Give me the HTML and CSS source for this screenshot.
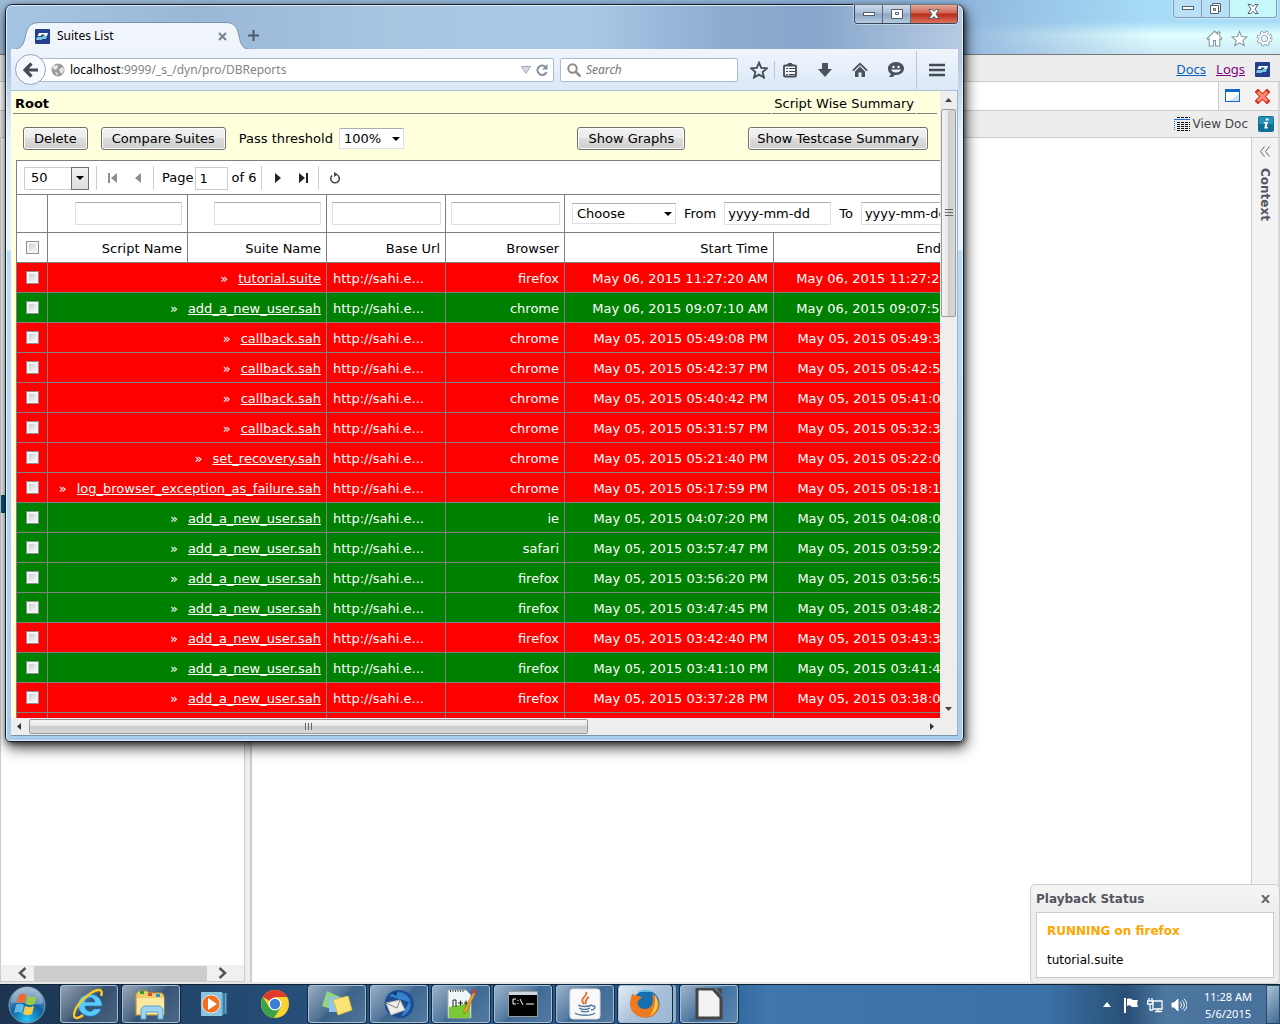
FILE: index.html
```html
<!DOCTYPE html>
<html lang="en">
<head>
<meta charset="utf-8">
<title>Suites List</title>
<link rel="stylesheet" href="styles.css">
</head>
<body>
<svg class="defs" aria-hidden="true">
  <symbol id="sahi" viewBox="0 0 15 15"><rect width="15" height="15" rx="1" fill="#233f8e"/><path d="M4 4h9l-1 3H9l.5-1.500H6.500L6 7H2.500z" fill="#fff"/><path d="M2 8h5l2-1.500h3L11 10H7.500l-1 1H1z" fill="#7cc5e0"/></symbol>
  <symbol id="house" viewBox="0 0 16 16"><path d="M8 1L1 8l1 1 1-.7V15h4v-5h2v5h4V8.300L14 9l1-1-2-2V2h-2v2z"/></symbol>
  <symbol id="home" viewBox="0 0 16 16"><path d="M8 4.500L3 9.500V15h3.500v-4.500h3V15H13V9.500z"/><path d="M.8 8.700L8 1.800l7.200 6.900" fill="none" stroke="#4a535e" stroke-width="1.800"/></symbol>
  <symbol id="star" viewBox="0 0 16 16"><path d="M8 1.500l2 4.600 5 .4-3.800 3.300 1.200 4.900L8 12.100l-4.400 2.600 1.200-4.900L1 6.500l5-.4z"/></symbol>
</svg>
<div class="desktop">
  <div class="ie">
    <header class="ie-glass">
      <div class="caption caption-pale">
        <button aria-label="Minimize"><svg width="12" height="5"><rect x=".5" y=".5" width="11" height="3" fill="#fff" stroke="#53606f"/></svg></button>
        <button aria-label="Restore"><svg width="13" height="12" fill="#fff" stroke="#53606f"><path d="M3.500.5h8v8h-8z"/><path d="M1.500 2.500h8v8h-8zM4.500 5.500h2v2h-2z"/></svg></button>
        <button class="wide" aria-label="Close"><svg width="12" height="10" fill="#fff" stroke="#53606f"><path d="M1 .5h3l2 2 2-2h3L8 5l3 4.500H8l-2-2-2 2H1L4 5z"/></svg></button>
      </div>
      <div class="ie-tools">
        <svg width="17" height="17" fill="#fff" stroke="#8798a4"><use href="#house"/></svg>
        <svg width="17" height="17" fill="#fff" stroke="#8798a4"><use href="#star"/></svg>
        <svg width="17" height="17" viewBox="0 0 17 17" fill="none"><circle cx="8.500" cy="8.500" r="6.500" stroke="#8798a4" stroke-width="3" stroke-dasharray="3 2.100"/><circle cx="8.500" cy="8.500" r="4.500" stroke="#8798a4" stroke-width="3.500"/><circle cx="8.500" cy="8.500" r="6.200" stroke="#fff" stroke-width="2" stroke-dasharray="1.800 3.070" stroke-dashoffset="-.6"/><circle cx="8.500" cy="8.500" r="4.500" stroke="#fff" stroke-width="2"/></svg>
      </div>
    </header>
    <nav class="bar links-bar">
      <a class="docs" href="#docs">Docs</a><a class="logs" href="#logs">Logs</a>
      <svg width="15" height="15"><use href="#sahi"/></svg>
    </nav>
    <div class="bar tabs-bar">
      <div class="tab-tools">
        <svg width="15" height="14"><rect x=".5" y=".5" width="14" height="12" fill="#fff" stroke="#1267c8"/><path d="M0 0h15v3H0z" fill="#1267c8"/><path d="M14 5v7H4z" fill="#cfe3f7"/></svg>
        <svg width="15" height="15"><path d="M3 3l9 9M12 3l-9 9" stroke="#d8351c" stroke-width="5" stroke-linecap="square"/><path d="M3 3l9 9M12 3l-9 9" stroke="#ff8c75" stroke-width="3"/></svg>
      </div>
    </div>
    <div class="bar doc-bar">
      <svg width="16" height="14" fill="none"><path d="M0 2.500h16" stroke="#1a6fd0"/><path d="M.5 4v10" stroke="#1a6fd0" stroke-dasharray="1 1"/><path d="M3 .5h13M3 5.500h13M3 7.500h13M3 9.500h13M3 11.500h13M3 13.500h13" stroke="#111" stroke-dasharray="3 1"/></svg>
      <span>View Doc</span>
      <svg class="info" width="16" height="16"><rect width="16" height="16" rx="2" fill="#0d7196"/><rect x="1" y="1" width="14" height="7" fill="#2593b6"/><path d="M8 2.500h2.500v2H7.600zM6 6h4l-1.300 5H10l-.4 1.500H6.200L7.300 7.500H5.600z" fill="#fff"/></svg>
    </div>
    <div class="ie-body">
      <div class="tree">
        <div class="tree-list"><div class="tree-pick"></div></div>
        <div class="flat-scroll">
          <svg width="10" height="12"><path d="M8.500 1L3 6l5.500 5" fill="none" stroke="#555" stroke-width="2.500"/></svg>
          <div class="flat-thumb"></div>
          <svg width="10" height="12"><path d="M1.500 1L7 6l-5.500 5" fill="none" stroke="#555" stroke-width="2.500"/></svg>
        </div>
      </div>
      <main class="editor"></main>
      <aside class="context"><svg width="10" height="11" fill="none" stroke="#666" stroke-width="1"><path d="M4.500.5l-4 5 4 5M9.500.5l-4 5 4 5"/></svg><span>Context</span></aside>
    </div>
  </div>

  <section class="playback">
    <header><h2>Playback Status</h2><button aria-label="Close"><svg width="9" height="8"><path d="M1 0l7 8M8 0L1 8" stroke="#666" stroke-width="2"/></svg></button></header>
    <div class="playback-body"><strong>RUNNING on firefox</strong><p>tutorial.suite</p></div>
  </section>

  <section class="firefox">
    <header class="strip">
      <div class="tab">
        <svg class="tab-shape" width="240" height="28" viewBox="0 0 240 28"><path d="M0 28C10 27 12 24 14 16C16 5 19 .5 29 .5H214C224 .5 226 5 228 14C230 24 232 27 240 27.500V28z" fill="#f0f5fc" stroke="#7c93ad"/><path d="M0 28h240" stroke="#f0f5fc"/></svg>
        <div class="tab-text"><svg width="15" height="15"><use href="#sahi"/></svg><span>Suites List</span><svg width="9" height="9"><path d="M1 1l7 7M8 1L1 8" stroke="#75818f" stroke-width="2"/></svg></div>
      </div>
      <svg class="plus" width="11" height="11"><path d="M5.500 0v11M0 5.500h11" stroke="#505a66" stroke-width="2"/></svg>
      <div class="caption">
        <button aria-label="Minimize"><svg width="12" height="5"><rect x=".5" y=".5" width="11" height="3" fill="#fff" stroke="#53606f"/></svg></button>
        <button aria-label="Maximize"><svg width="12" height="10" fill="#fff" stroke="#53606f"><path d="M.5.500h11v9H.5zM4.500 3.500h3v2h-3z"/></svg></button>
        <button class="wide close" aria-label="Close"><svg width="12" height="10" fill="#fff" stroke="#53606f"><path d="M1 .5h3l2 2 2-2h3L8 5l3 4.500H8l-2-2-2 2H1L4 5z"/></svg></button>
      </div>
    </header>
    <div class="chrome">
      <button class="back" aria-label="Back"><svg width="16" height="16"><path d="M8.500 1.500L2 8l6.500 6.500M2.500 8H15" fill="none" stroke="#434b55" stroke-width="3.200"/></svg></button>
      <div class="url">
        <svg width="14" height="14"><circle cx="7" cy="7" r="6.500" fill="#9c9c9c"/><path d="M2 3l4-1 1 2-2 3-3-1zM8 6l4-2 1 3-2 4-2-2zM4 9l3 1-1 3z" fill="#e6e6e6"/></svg>
        <span class="address"><b>localhost</b>:9999/_s_/dyn/pro/DBReports</span>
        <svg width="10" height="8"><path d="M.5.500h9L5 7.500z" fill="#d5dbe2" stroke="#a2acb7"/></svg>
        <svg class="reload" width="12" height="12"><path d="M10 3.500A4.700 4.700 0 1 0 10.500 8" fill="none" stroke="#8393a3" stroke-width="2"/><path d="M11.500 0v5.500H6z" fill="#8393a3"/></svg>
      </div>
      <div class="search"><svg width="14" height="14" fill="none" stroke="#8c8c8c"><circle cx="5.500" cy="5.500" r="4.200" stroke-width="2"/><path d="M8.500 8.500l5 5" stroke-width="2.500"/></svg><input aria-label="Search" placeholder="Search"></div>
      <div class="ff-tools">
        <svg width="18" height="18" viewBox="0 0 16 16" fill="none" stroke="#434b55" stroke-width="1.600"><use href="#star"/></svg>
        <i class="sep short"></i>
        <svg width="16" height="16"><rect x="2" y="3.500" width="12" height="11" rx="1" fill="#f4f8fd" stroke="#434b55" stroke-width="1.800"/><path d="M5 3.500l1.500-2h3l1.500 2z" stroke="#434b55" fill="#434b55"/><path d="M4 6.500h2M7 6.500h6M4 9.500h2M7 9.500h6M4 12.500h2M7 12.500h6" stroke="#434b55"/></svg>
        <svg width="14" height="14"><path d="M4 0h6v6h4l-7 8-7-8h4z" fill="#4a535e"/></svg>
        <svg width="16" height="16" fill="#4a535e"><use href="#home"/></svg>
        <svg width="16" height="15"><path d="M8 0c5 0 8 3 8 6.500S13 13 8 13c-1 0-2 0-3 2l-4 0 2-3C1 11 0 9 0 6.500 0 3 3 0 8 0z" fill="#4a535e"/><circle cx="5.500" cy="5" r="1.200" fill="#fff"/><circle cx="10.500" cy="5" r="1.200" fill="#fff"/><path d="M3 7.500h10c-1 4-9 4-10 0z" fill="#e5effa"/></svg>
        <i class="sep"></i>
        <svg width="16" height="14"><path d="M0 2h16M0 7h16M0 12h16" stroke="#434b55" stroke-width="2.600"/></svg>
      </div>
    </div>
    <div class="view">
      <div class="page">
        <div class="crumbs"><strong>Root</strong><span class="mode">Script Wise Summary</span><span class="rest"></span></div>
        <div class="actions">
          <button class="btn">Delete</button>
          <button class="btn">Compare Suites</button>
          <label for="pass">Pass threshold</label>
          <div class="pick pass"><select id="pass"><option>100%</option></select><i></i></div>
          <button class="btn graphs">Show Graphs</button>
          <button class="btn tight">Show Testcase Summary</button>
        </div>
        <div class="grid">
          <div class="pager">
            <div class="pick size"><select aria-label="Rows per page"><option>50</option></select><i></i></div>
            <i class="rule"></i>
            <button aria-label="First page"><svg width="9" height="10" fill="#8d8d8d"><path d="M0 0h2v10H0zM9 0v10L3 5z"/></svg></button>
            <button aria-label="Previous page"><svg width="9" height="10" fill="#8d8d8d"><path d="M7 0v10L1 5z"/></svg></button>
            <i class="rule"></i>
            <label for="pg">Page</label><input id="pg" value="1"><span>of 6</span>
            <i class="rule"></i>
            <button aria-label="Next page"><svg width="9" height="10" fill="#222"><path d="M2 0v10l6-5z"/></svg></button>
            <button aria-label="Last page"><svg width="9" height="10" fill="#222"><path d="M7 0h2v10H7zM0 0v10l6-5z"/></svg></button>
            <i class="rule"></i>
            <button aria-label="Refresh"><svg width="12" height="12"><path d="M3 3.500A4.300 4.300 0 1 0 8.500 3" fill="none" stroke="#444" stroke-width="1.500"/><path d="M5 0l4 2.500L5 5z" fill="#444"/></svg></button>
          </div>
          <table>
            <colgroup><col class="c-tick"><col class="c-script"><col class="c-suite"><col class="c-mid"><col class="c-mid"><col class="c-time"><col class="c-time"></colgroup>
            <thead>
              <tr class="filters"><td></td><td><input aria-label="Script Name"></td><td><input aria-label="Suite Name"></td><td><input aria-label="Base Url"></td><td><input aria-label="Browser"></td>
                <td colspan="2"><div class="dates"><div class="pick choose"><select aria-label="Period"><option>Choose</option></select><i></i></div><label for="from">From</label><input id="from" value="yyyy-mm-dd"><label for="to">To</label><input id="to" value="yyyy-mm-dd"></div></td></tr>
              <tr><th><input type="checkbox" aria-label="Select all"></th><th>Script Name</th><th>Suite Name</th><th>Base Url</th><th>Browser</th><th>Start Time</th><th>End Time</th></tr>
            </thead>
            <tbody>
              <tr class="fail"><td><input type="checkbox" aria-label="Select"></td><td colspan="2">»<a href="#r1">tutorial.suite</a></td><td>http://sahi.e...</td><td>firefox</td><td>May 06, 2015 11:27:20 AM</td><td>May 06, 2015 11:27:28 AM</td></tr>
              <tr class="pass-row"><td><input type="checkbox" aria-label="Select"></td><td colspan="2">»<a href="#r2">add_a_new_user.sah</a></td><td>http://sahi.e...</td><td>chrome</td><td>May 06, 2015 09:07:10 AM</td><td>May 06, 2015 09:07:50 AM</td></tr>
              <tr class="fail"><td><input type="checkbox" aria-label="Select"></td><td colspan="2">»<a href="#r3">callback.sah</a></td><td>http://sahi.e...</td><td>chrome</td><td>May 05, 2015 05:49:08 PM</td><td>May 05, 2015 05:49:30 PM</td></tr>
              <tr class="fail"><td><input type="checkbox" aria-label="Select"></td><td colspan="2">»<a href="#r4">callback.sah</a></td><td>http://sahi.e...</td><td>chrome</td><td>May 05, 2015 05:42:37 PM</td><td>May 05, 2015 05:42:58 PM</td></tr>
              <tr class="fail"><td><input type="checkbox" aria-label="Select"></td><td colspan="2">»<a href="#r5">callback.sah</a></td><td>http://sahi.e...</td><td>chrome</td><td>May 05, 2015 05:40:42 PM</td><td>May 05, 2015 05:41:03 PM</td></tr>
              <tr class="fail"><td><input type="checkbox" aria-label="Select"></td><td colspan="2">»<a href="#r6">callback.sah</a></td><td>http://sahi.e...</td><td>chrome</td><td>May 05, 2015 05:31:57 PM</td><td>May 05, 2015 05:32:30 PM</td></tr>
              <tr class="fail"><td><input type="checkbox" aria-label="Select"></td><td colspan="2">»<a href="#r7">set_recovery.sah</a></td><td>http://sahi.e...</td><td>chrome</td><td>May 05, 2015 05:21:40 PM</td><td>May 05, 2015 05:22:00 PM</td></tr>
              <tr class="fail"><td><input type="checkbox" aria-label="Select"></td><td colspan="2">»<a href="#r8">log_browser_exception_as_failure.sah</a></td><td>http://sahi.e...</td><td>chrome</td><td>May 05, 2015 05:17:59 PM</td><td>May 05, 2015 05:18:10 PM</td></tr>
              <tr class="pass-row"><td><input type="checkbox" aria-label="Select"></td><td colspan="2">»<a href="#r9">add_a_new_user.sah</a></td><td>http://sahi.e...</td><td>ie</td><td>May 05, 2015 04:07:20 PM</td><td>May 05, 2015 04:08:00 PM</td></tr>
              <tr class="pass-row"><td><input type="checkbox" aria-label="Select"></td><td colspan="2">»<a href="#r10">add_a_new_user.sah</a></td><td>http://sahi.e...</td><td>safari</td><td>May 05, 2015 03:57:47 PM</td><td>May 05, 2015 03:59:20 PM</td></tr>
              <tr class="pass-row"><td><input type="checkbox" aria-label="Select"></td><td colspan="2">»<a href="#r11">add_a_new_user.sah</a></td><td>http://sahi.e...</td><td>firefox</td><td>May 05, 2015 03:56:20 PM</td><td>May 05, 2015 03:56:50 PM</td></tr>
              <tr class="pass-row"><td><input type="checkbox" aria-label="Select"></td><td colspan="2">»<a href="#r12">add_a_new_user.sah</a></td><td>http://sahi.e...</td><td>firefox</td><td>May 05, 2015 03:47:45 PM</td><td>May 05, 2015 03:48:20 PM</td></tr>
              <tr class="fail"><td><input type="checkbox" aria-label="Select"></td><td colspan="2">»<a href="#r13">add_a_new_user.sah</a></td><td>http://sahi.e...</td><td>firefox</td><td>May 05, 2015 03:42:40 PM</td><td>May 05, 2015 03:43:30 PM</td></tr>
              <tr class="pass-row"><td><input type="checkbox" aria-label="Select"></td><td colspan="2">»<a href="#r14">add_a_new_user.sah</a></td><td>http://sahi.e...</td><td>firefox</td><td>May 05, 2015 03:41:10 PM</td><td>May 05, 2015 03:41:40 PM</td></tr>
              <tr class="fail"><td><input type="checkbox" aria-label="Select"></td><td colspan="2">»<a href="#r15">add_a_new_user.sah</a></td><td>http://sahi.e...</td><td>firefox</td><td>May 05, 2015 03:37:28 PM</td><td>May 05, 2015 03:38:00 PM</td></tr>
              <tr class="fail"><td></td><td colspan="2"></td><td></td><td></td><td></td><td></td></tr>
            </tbody>
          </table>
        </div>
      </div>
      <div class="vbar">
        <svg width="7" height="4"><path d="M3.500 0L7 4H0z" fill="#444"/></svg>
        <div class="vthumb"><svg width="8" height="8"><path d="M0 .5h8M0 3.500h8M0 6.500h8" stroke="#666"/></svg></div>
        <svg class="end" width="7" height="4"><path d="M3.500 4L7 0H0z" fill="#444"/></svg>
      </div>
      <div class="hbar">
        <svg width="4" height="7"><path d="M0 3.500L4 0v7z" fill="#333"/></svg>
        <div class="hthumb"><svg width="8" height="7"><path d="M.5 0v7M3.500 0v7M6.500 0v7" stroke="#666"/></svg></div>
        <svg class="end" width="4" height="7"><path d="M4 3.500L0 0v7z" fill="#333"/></svg>
      </div>
      <div class="corner"></div>
    </div>
  </section>

  <footer class="taskbar">
    <button class="start" aria-label="Start"><svg width="38" height="38" viewBox="0 0 38 38"><defs><radialGradient id="orb" cx=".5" cy=".9" r=".9"><stop offset="0" stop-color="#25c4f5"/><stop offset=".5" stop-color="#10639f"/><stop offset="1" stop-color="#89a5bf"/></radialGradient></defs><circle cx="19" cy="19" r="18" fill="url(#orb)" stroke="#7699b5"/><path d="M3 17a16 16 0 0 1 32 0c-8 4-22-1-32 0z" fill="#fff" opacity=".3"/><path d="M11 9c3-2 5-1 7.500 0l-2 8c-3-1.500-5-1.500-8 0z" fill="#ef6a2f"/><path d="M19.500 10c3 1.500 6 1.500 9 0l-2 8c-3 1.500-6 1.500-9 0z" fill="#9ccb49"/><path d="M8 19c3-2 5-1 8 0l-2 8c-3-1.500-5-1.500-8 0z" fill="#63b9ea"/><path d="M17 20c3 1.500 6 1.500 9 0l-2 8c-3 1.500-6 1.500-9 0z" fill="#fbcb45"/></svg></button>
    <button class="task on" aria-label="Internet Explorer"><svg width="32" height="32"><path d="M29 18H12c0 6 7 7 9 3h7c-4 11-22 9-23-4C5 3 29 2 29 18zM12 14h10c-1-6-9-6-10 0z" fill="#5ccaf8" stroke="#1f7fc2" stroke-width=".7"/><path d="M28 8c3-8-4-7-10-3C8 11 1 21 1 27c0 5 6 3 9 0" fill="none" stroke="#f8c923" stroke-width="2.500"/></svg></button>
    <button class="task on" aria-label="Explorer"><svg width="34" height="32"><path d="M2 6l3-3h8l2 2h13l2 3v19H2z" fill="#f0cd66" stroke="#c79c37"/><path d="M6 3h4v3H6z" fill="#1d9f39"/><path d="M14 5h4v3h-4z" fill="#d64c36"/><path d="M22 6h4v3h-4z" fill="#3091db"/><path d="M3 10h27v16H3z" fill="#fae8a1"/><path d="M7 31V21l3-3h16l3 3v10h-5v-7H12v7z" fill="#9ed4ef" stroke="#5ba5cc"/></svg></button>
    <button class="task" aria-label="Media Player"><svg width="32" height="32"><path d="M4 4h21v24H4z" fill="#8cc5e3"/><path d="M25.500 5v22M28.500 5v21" stroke="#5fa8cf" stroke-width="2"/><circle cx="14" cy="16" r="9" fill="#f1701e" stroke="#fff" stroke-width=".7"/><path d="M11 10l9 6-9 6z" fill="#fff"/></svg></button>
    <button class="task" aria-label="Chrome"><svg width="30" height="30" viewBox="0 0 30 30"><circle cx="15" cy="15" r="14" fill="#fbd330"/><path d="M15 15L2.900 8A14 14 0 0 1 27.200 8H15z" fill="#df3a2d"/><path d="M2.900 8A14 14 0 0 0 14 29l7-11-6 3-6-3z" fill="#3aa34a"/><circle cx="15" cy="15" r="6.500" fill="#fff"/><circle cx="15" cy="15" r="5.200" fill="#3c7ed0"/></svg></button>
    <button class="task on" aria-label="Sticky Notes"><svg width="34" height="28"><path d="M7 1l13 6-6 13L2 16z" fill="#92d481"/><path d="M9 7h14v15H9z" fill="#8fc5f6"/><path d="M13 10l15-4 4 14-14 5z" fill="#fae477" stroke="#d9ba3d"/></svg></button>
    <button class="task on" aria-label="Thunderbird"><svg width="34" height="32"><path d="M5 8C10 0 25 0 30 9c5 10-1 22-13 21C5 29-1 18 5 8z" fill="#1c4c94"/><path d="M7 8c7-6 17-5 21 4 3 9-4 15-9 17l8-15z" fill="#3583cc"/><path d="M4 15l14-3 5 10-14 5z" fill="#f0eee8" stroke="#b5afa5"/><path d="M4 15l11 5 3-8" fill="none" stroke="#888"/><path d="M10 5l5-1-1 4z" fill="#0f3469"/></svg></button>
    <button class="task on" aria-label="Notepad++"><svg width="32" height="32"><path d="M3 2h18l5 5v23H3z" fill="#eef7f9" stroke="#aaa"/><path d="M4 19l21-4v15H4z" fill="#7cc936"/><path d="M5 3h15" stroke="#555" stroke-dasharray="1 1.500" stroke-width="2"/><path d="M8 19v-7h3v7M13 15h5M15.500 12.500v5M19 15h4M21 12.500v5" fill="none" stroke="#222"/><path d="M29 3l2 1-9 19-3 3v-4z" fill="#f1a52b" stroke="#976117" stroke-width=".6"/><path d="M28 1l4 2-1 3-4-2z" fill="#c24545"/></svg></button>
    <button class="task on" aria-label="Command Prompt"><svg width="30" height="26"><path d="M.5.500h29v25H.5z" fill="#000" stroke="#999"/><path d="M1 1h28v3H1z" fill="#ccd5e0"/><path d="M8 8H5v5h3M10 9v1M10 12v1M12 8l3 6M18 13h8" fill="none" stroke="#fff"/></svg></button>
    <button class="task on" aria-label="Java"><svg width="32" height="32"><rect x="1" y="1" width="30" height="30" rx="3" fill="#f8f8f8" stroke="#ddd"/><path d="M17 4c3 4-8 6-2 12M20 9c-5 3-2 5-4 7" fill="none" stroke="#e66b2b" stroke-width="1.800"/><path d="M9 17c3 2 10 2 14 0M10 20c3 2 8 2 11 0M12 23c2 1 6 1 8 0M6 25c4 3 17 3 20 0M23 18c5-1 3 4-1 4" fill="none" stroke="#54799a" stroke-width="1.500"/></svg></button>
    <button class="task on active" aria-label="Firefox"><svg width="32" height="32"><circle cx="17" cy="16" r="13.500" fill="#146eaf"/><path d="M9 4c8-5 19-1 20 9 0-3-2-7-5-9z" fill="#65bce5"/><path d="M3 6c2 1 4 1 6 2l4 1-4 4c-2 6 5 10 11 7 4-2 5-9 3-14 9 5 9 16 2 21-9 6-23 1-24-10 0-5 1-7 2-11z" fill="#ec7a20"/><path d="M26 7c5 7 3 17-5 21 4-6 6-13 5-21z" fill="#f9cf40"/></svg></button>
    <button class="task on" aria-label="LibreOffice"><svg width="28" height="32"><path d="M2 1h16l8 9v20H2z" fill="#f3f3f3" stroke="#454545" stroke-width="3"/><path d="M18 1l8 9" stroke="#454545" stroke-width="2"/><path d="M21 0h6v7z" fill="#4b4b4b"/></svg></button>
    <div class="tray">
      <svg width="8" height="5"><path d="M4 0l4 5H0z" fill="#fff"/></svg>
      <svg width="16" height="16" fill="#fff"><path d="M1 1h2v15H1zM4 2c3-1 4 0 6 1h5l-1 3 1 4H9C7 8 6 8 4 9z"/></svg>
      <svg width="16" height="16" fill="none" stroke="#fff" stroke-width="1.300"><path d="M6 4h9v8H6zM8 14.500h7M11 12v3M2 1v3M5 1v3M.5 4h5v3h-5zM3 7v6h3"/></svg>
      <svg width="16" height="16" fill="none" stroke="#fff"><path d="M1 6h2l4-4v12l-4-4H1z" fill="#fff"/><path d="M9 5c2 2 2 4 0 6M11 3.500c3 3 3 6 0 9M13 2c4 4 4 8 0 12"/></svg>
      <div class="clock"><span>11:28 AM</span><span>5/6/2015</span></div>
      <button class="peek" aria-label="Show desktop"></button>
    </div>
  </footer>
</div>
</body>
</html>
```
FILE: styles.css
```css
* { box-sizing: border-box; }
body { margin: 0; font: 13px/16px Verdana, "DejaVu Sans", sans-serif; color: #000; }
button, input, select { font: inherit; color: inherit; margin: 0; padding: 0; }
button { border: 0; background: none; }
svg { display: block; flex: none; }
.defs { position: absolute; width: 0; height: 0; }
.desktop { position: relative; display: flex; flex-direction: column; height: 100vh; overflow: hidden; background: #fff; }

/* Browser in the background */
.ie { flex: 1; min-height: 0; display: flex; flex-direction: column; }
.ie-glass { height: 55px; display: flex; flex-direction: column; align-items: flex-end; justify-content: space-between; padding-right: 3px; border-bottom: 1px solid #777;
  background: linear-gradient(90deg, #9dbbd8, #8fb4dc 74%, #8fb4dc00 90%), linear-gradient(#a5dcf6, #a8dcf7 40%, #e0ffff 65%, #cce9f5); }
.caption { display: flex; align-self: flex-start; border: 1px solid #39465a; border-top: 0; border-radius: 0 0 4px 4px; overflow: hidden; box-shadow: 0 0 0 1px #ffffff66; }
.caption button { width: 28px; height: 18px; display: grid; place-items: center; border-right: 1px solid #596b80; background: linear-gradient(#cddaea, #a9bdd4 45%, #8ca5c2 50%, #b5cbe2); }
.caption button.wide { width: 46px; border-right: 0; }
.caption button.close { background: linear-gradient(#e5a99b, #cf6150 45%, #b62a14 50%, #dc7460); }
.caption-pale { align-self: flex-end; border-color: #7f9db5; }
.caption-pale button { height: 17px; background: #b9e0f5; border-color: #7f9db5; }
.caption-pale .wide { background: #c8f8fc; }
.ie-tools { display: flex; gap: 8px; padding: 0 4px 7px 0; }
.bar { display: flex; align-items: center; justify-content: flex-end; background: #ededed; border-bottom: 1px solid #ccc; border-right: 2px solid #d5d5d5; }
.links-bar { height: 27px; gap: 10px; padding: 2px 10px 0 0; font-family: "Noto Sans", sans-serif; border-right: 0; }
.links-bar .docs { color: #0563c1; }
.links-bar .logs { color: #800080; }
.tabs-bar { height: 29px; background: #fff; align-items: stretch; }
.tab-tools { display: flex; align-items: center; gap: 15px; padding: 0 8px 0 6px; border-left: 1px solid #ccc; background: #f3f3f3; }
.doc-bar { height: 27px; gap: 3px; padding-right: 4px; font: 12px/16px "DejaVu Sans", sans-serif; color: #444; }
.doc-bar .info { margin-left: 7px; }
.ie-body { flex: 1; min-height: 0; display: flex; background: #ededed; border-bottom: 2px solid #e6e6e6; }
.tree { width: 245px; display: flex; flex-direction: column; border: 1px solid #ccc; border-top: 0; background: #fff; }
.tree-list { flex: 1; padding-top: 357px; }
.tree-pick { height: 18px; background: #005a84; }
.flat-scroll { height: 16px; display: flex; align-items: center; gap: 7px; padding: 0 16px; background: #f0f0f0; }
.flat-thumb { flex: 1; height: 15px; margin-right: 4px; background: #cdcdcd; }
.editor { flex: 1; margin-left: 5px; background: #fff; border-left: 2px solid #ccc; }
.context { width: 29px; padding: 8px 7px; display: flex; flex-direction: column; align-items: center; gap: 11px; background: #f3f3f3; border-left: 1px solid #ccc; border-right: 2px solid #d5d5d5; font: bold 12px/14px "DejaVu Sans", sans-serif; color: #555560; }
.context span { writing-mode: vertical-rl; }

/* Playback popup */
.playback { position: absolute; right: 0; bottom: 40px; width: 250px; padding: 0 5px 5px; background: linear-gradient(#f5f5f5, #ededed 30px); border: 1px solid #ccc; border-radius: 5px; }
.playback header { display: flex; align-items: center; justify-content: space-between; height: 27px; padding-right: 4px; }
.playback h2 { margin: 0; font: bold 12px/16px "DejaVu Sans", sans-serif; color: #555560; }
.playback-body { height: 66px; padding: 10px; border: 1px solid #ccc; background: #fff; font: 12px/16px "DejaVu Sans", sans-serif; }
.playback-body strong { color: #ffa500; }
.playback-body p { margin: 13px 0 0; }

/* Firefox window */
.firefox { position: absolute; inset: 4px 316px 282px 5px; display: flex; flex-direction: column; padding: 0 5px 5px; border: 1px solid #15202e; border-radius: 7px 7px 5px 5px; 
  background: linear-gradient(#e6f2fd00 60px, #e6f2fd 130px, #e6f2fd 245px, #b9dcfb 246px, #a7cbeb), linear-gradient(90deg, #a6c4e4, #9ab8d6 20%, #a7c5e1 40%, #a9cae7 60%, #8dacd0 75%, #88a6cb 85%, #b5cbe2);
  box-shadow: 2px 6px 14px #000000b0, 1px 2px 5px #00000080, inset 0 0 0 1px #ffffffb0; }
.strip { height: 45px; display: flex; align-items: flex-end; border-bottom: 1px solid #7c93ad; margin-bottom: -1px; }
.tab { display: grid; width: 240px; margin-bottom: -1px; }
.tab > * { grid-area: 1 / 1; }
.tab-text { display: flex; align-items: center; gap: 7px; padding: 0 24px; font: 12px/16px "Noto Sans", sans-serif; z-index: 1; }
.tab-text span { flex: 1; }
.plus { margin: 0 auto 8px -3px; }
.chrome { height: 42px; display: flex; align-items: center; padding-right: 13px; background: linear-gradient(#f0f5fc, #dbe8f7); border-bottom: 1px solid #a8bfd7; }
.back { width: 31px; height: 31px; margin-left: 4px; z-index: 1; display: grid; place-items: center; border: 1px solid #94a6bb; border-radius: 50%; background: #f6f9fd; }
.url, .search { display: flex; align-items: center; height: 24px; background: #fff; border: 1px solid #a9bdd3; border-radius: 2px; }
.url { flex: 1; margin-left: -15px; padding: 0 5px 0 19px; gap: 5px; font: 12px/16px "Noto Sans", sans-serif; color: #858585; }
.address { flex: 1; }
.address b { font-weight: 400; color: #000; }
.search { width: 178px; margin-left: 6px; padding: 0 6px; gap: 5px; }
.search input { flex: 1; min-width: 0; border: 0; background: none; outline: 0; font: italic 12px/16px "Noto Sans", sans-serif; }
.search input::placeholder { color: #777; opacity: 1; }
.ff-tools { display: flex; align-items: center; gap: 20px; margin-left: 12px; }
.sep { width: 1px; height: 38px; margin: 0 -8px; background: #b9c8d8; }
.sep.short { height: 18px; margin: 0 -13px 0 -14px; }
.view { flex: 1; min-height: 0; display: grid; grid-template: minmax(0, 1fr) 17px / minmax(0, 1fr) 17px; background: #eee; border-bottom: 1px solid #7c93ad; border-right: 1px solid #9db4ce; }
.page { overflow: hidden; background: #ffffdd; }
.crumbs { display: flex; gap: 1px; margin: 2px 3px 0 2px; line-height: 18px; }
.crumbs > * { border-bottom: 1px solid #808080; height: 21px; padding: 2px 2px 0; }
.crumbs strong { flex: 1; }
.crumbs .mode { white-space: nowrap; }
.crumbs .rest { width: 20px; }
.actions { display: flex; align-items: center; height: 46px; padding: 3px 12px 0; }
.btn { height: 23px; padding: 0 10px; border: 1px solid #707070; border-radius: 3px; box-shadow: inset 0 0 0 1px #fbfbfb; background: linear-gradient(#f2f2f2, #ebebeb 50%, #ddd 50%, #cfcfcf); white-space: nowrap; }
.btn + .btn { margin-left: 13px; }
.btn.tight { padding: 0 8px; margin-left: 63px; }
.btn.graphs { margin-left: auto; }
.actions label { margin: 0 6px 0 13px; }
.pick { display: grid; align-items: center; height: 21px; }
.pick > * { grid-area: 1 / 1; }
.pick select { appearance: none; width: 100%; height: 100%; padding: 0 4px; border: 1px solid #dadfea; border-top-color: #ababb3; border-radius: 1px; background: #fff; }
.pick i { justify-self: end; margin-right: 4px; border: 4px solid transparent; border-top-color: #000; border-bottom: 0; pointer-events: none; }
.pass { width: 65px; }
.choose { width: 104px; }
.grid { margin-left: 5px; border-top: 1px solid #808080; }
.pager { height: 33px; display: flex; align-items: center; gap: 3px; padding: 1px 0 0 7px; background: #fff; border-left: 1px solid #808080; }
.pick.size { width: 65px; height: 23px; }
.size select { padding-left: 6px; border-color: #ccc; }
.size i { width: 18px; height: 23px; margin: 0; border: 1px solid #707070; background: linear-gradient(#f2f2f2, #ddd); display: grid; place-items: center; }
.size i::after { content: ""; border: 4px solid transparent; border-top-color: #000; border-bottom: 0; }
.pager button { width: 23px; height: 22px; display: grid; place-items: center; }
.rule { width: 1px; height: 24px; margin-right: 1px; background: #ccc; }
.size + .rule { margin-left: 4px; }
.pager label { margin-left: 4px; }
.pager span { margin-right: 2px; }
.pager input { width: 33px; height: 23px; margin-left: -1px; padding-left: 3px; border: 1px solid #ccc; }
table { table-layout: fixed; width: 967px; border-collapse: collapse; background: #fff; }
.c-tick { width: 31px; } .c-script { width: 140px; } .c-suite { width: 139px; } .c-mid { width: 119px; } .c-time { width: 209px; }
td, th { height: 30px; padding: 2px 5px 0; border: 1px solid #808080; text-align: right; font-weight: 400; white-space: nowrap; }
td:first-child, th:first-child { padding: 0; text-align: center; }
tbody td:nth-child(3) { text-align: left; padding-left: 6px; }
tbody td:last-child { padding-right: 10px; }
.filters td { height: 38px; padding-top: 0; }
.filters input { width: 107px; height: 23px; padding: 0 3px; border: 1px solid #dadfea; border-top-color: #ababb3; border-radius: 1px; vertical-align: middle; }
.filters td:nth-child(n+4) > input { width: 109px; }
.dates { display: flex; align-items: center; gap: 8px; padding-left: 2px; }
.fail { background: #f00; color: #fff; }
.pass-row { background: #008000; color: #fff; }
td a { margin-left: 10px; color: #fff; }
input[type="checkbox"] { appearance: none; display: block; width: 13px; height: 13px; margin: 0 auto; border: 1px solid #8e8f8f; background: linear-gradient(135deg, #cbcfd5, #f6f6f6) content-box, #f4f4f4; padding: 2px; }
.vbar { display: flex; flex-direction: column; align-items: center; padding: 7px 0; gap: 7px; background: #eee; }
.vthumb { width: 15px; height: 34%; display: grid; place-items: center; border: 1px solid #999; border-radius: 2px; background: linear-gradient(90deg, #f4f4f4, #e5e5e5 50%, #cdcdcd 50%, #d8d8d8); }
.vbar .end { margin-top: auto; }
.hbar { display: flex; align-items: center; padding: 0 6px; gap: 8px; background: #eee; }
.hthumb { width: 61%; height: 15px; display: grid; place-items: center; border: 1px solid #999; border-radius: 2px; background: linear-gradient(#f4f4f4, #e5e5e5 50%, #cdcdcd 50%, #d8d8d8); }
.hbar .end { margin-left: auto; }

/* Taskbar */
.taskbar { height: 40px; display: flex; gap: 4px; border-top: 1px solid #10202c; background: linear-gradient(90deg, #1c3450, #23466c 15%, #2b5b8a 35%, #2b5c8d 55%, #3e76ad 60%, #3a70a6 82%, #294f76 88%, #4d77a0 91%, #47719b); }
.start { width: 56px; display: grid; place-items: center; }
.start svg { margin-right: 2px; }
.task { width: 58px; height: 38px; display: grid; place-items: center; border: 1px solid transparent; border-radius: 3px; }
.task.on { border-color: #a3bed5; background: linear-gradient(135deg, #ffffff88, #ffffff30 45%, #ffffff18 50%, #ffffff30); box-shadow: 0 0 0 1px #102840; }
.task.active { width: 54px; margin-right: 4px; background: linear-gradient(135deg, #e4edf5, #a9c2da 50%, #9bb7d3); box-shadow: 0 0 0 1px #102840, 4px 0 0 #8facc8; }
.tray { margin-left: auto; display: flex; align-items: center; gap: 8px; color: #fff; font: 11px/17px "Noto Sans", sans-serif; }
.tray > svg:first-child { margin-right: 4px; }
.clock { width: 64px; display: flex; flex-direction: column; align-items: center; padding-left: 2px; }
.peek { align-self: stretch; width: 14px; margin-left: -1px; border: 1px solid #274a6b; background: linear-gradient(135deg, #a9c2d8, #41698f); }
```
